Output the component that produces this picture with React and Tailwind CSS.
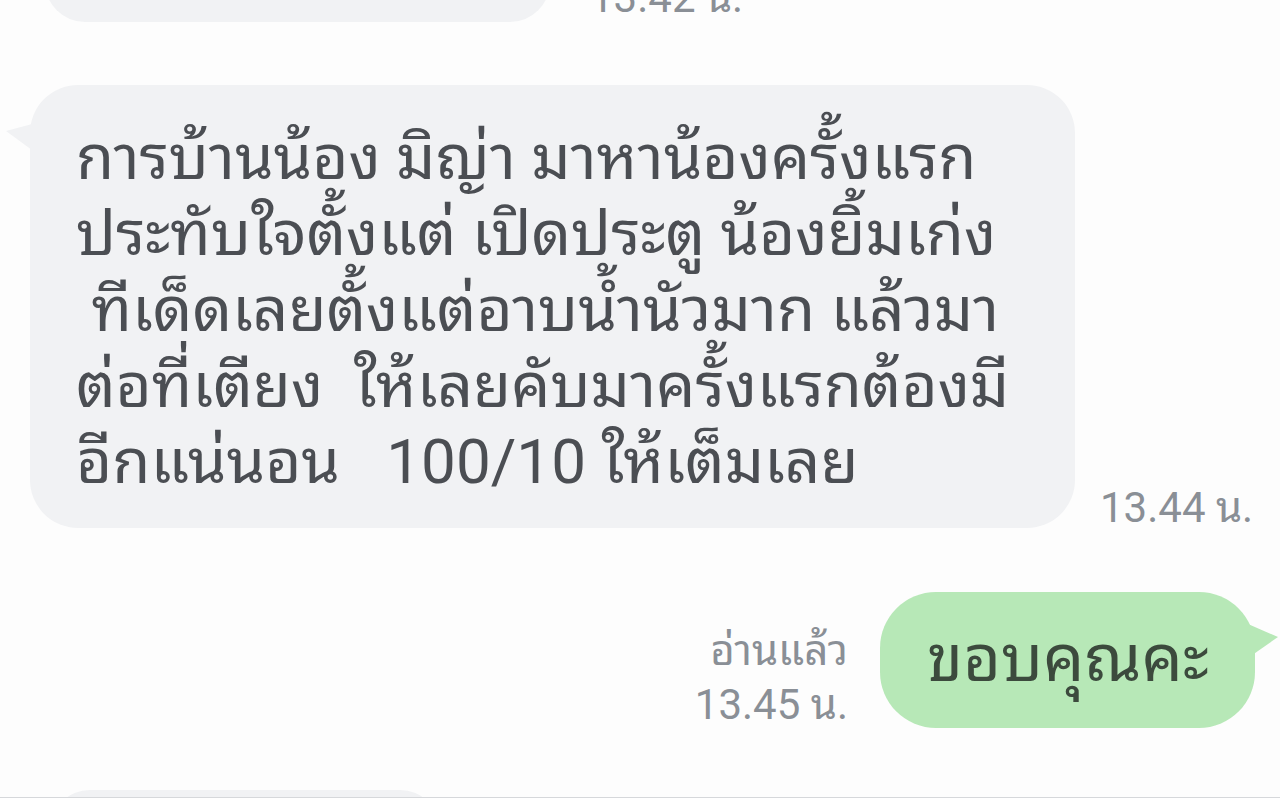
export default function App() {
  return (
    <div className="w-[1280px] h-[798px] overflow-hidden bg-[#fdfdfd] flex flex-col font-['Roboto','Noto_Sans_Thai_Looped',sans-serif]">
      {/* partial previous message */}
      <div className="flex items-end mt-[-58px] pl-[45px]">
        <div className="w-[505px] h-[80px] rounded-[40px] bg-[#f1f2f4]" />
        <div className="ml-[40px] text-[42px] leading-[44px] text-[#8a8f96] mb-[2px]">13.42 น.</div>
      </div>

      {/* big incoming message */}
      <div className="flex items-end mt-[63px] pl-[30px]">
        <div className="relative">
          <svg className="absolute left-[-24px] top-[38px]" width="30" height="30" viewBox="0 0 30 30">
            <path d="M30 0 L0 8 L30 30 Z" fill="#f1f2f4" />
          </svg>
          <div className="relative w-[1045px] h-[443px] rounded-[48px] bg-[#f1f2f4] pl-[46px] pt-[35px] text-[62px] leading-[76px] text-[#4b4e53] whitespace-pre">
            {"การบ้านน้อง มิญ่า มาหาน้องครั้งแรก\nประทับใจตั้งแต่ เปิดประตู น้องยิ้มเก่ง\n ทีเด็ดเลยตั้งแต่อาบน้ำนัวมาก แล้วมา\nต่อที่เตียง  ให้เลยคับมาครั้งแรกต้องมี\nอีกแน่นอน   100/10 ให้เต็มเลย"}
          </div>
        </div>
        <div className="ml-[25px] mb-[-2px] text-[42px] leading-[44px] text-[#8a8f96]">13.44 น.</div>
      </div>

      {/* outgoing message */}
      <div className="flex items-end justify-end mt-[64px] pr-[25px]">
        <div className="flex flex-col items-end mr-[32px] mb-[-4px] text-[42px] leading-[54px] text-[#8a8f96]">
          <div>อ่านแล้ว</div>
          <div>13.45 น.</div>
        </div>
        <div className="relative">
          <div className="w-[375px] h-[136px] rounded-[56px] bg-[#b7e8b7] flex items-center pl-[47px] text-[65px] text-[#3c4a3d]">
            ขอบคุณคะ
          </div>
          <svg className="absolute right-[-23px] top-[32px]" width="30" height="34" viewBox="0 0 30 34">
            <path d="M0 0 L30 13 L0 34 Z" fill="#b7e8b7" />
          </svg>
        </div>
      </div>

      {/* next message top, cut by bottom edge */}
      <div className="mt-[62px] pl-[50px]">
        <div className="w-[390px] h-[80px] rounded-[40px] bg-[#f1f2f4]" />
      </div>
      <div className="h-px shrink-0 bg-[#d6d8db] mt-[-73px]" />
    </div>
  );
}
